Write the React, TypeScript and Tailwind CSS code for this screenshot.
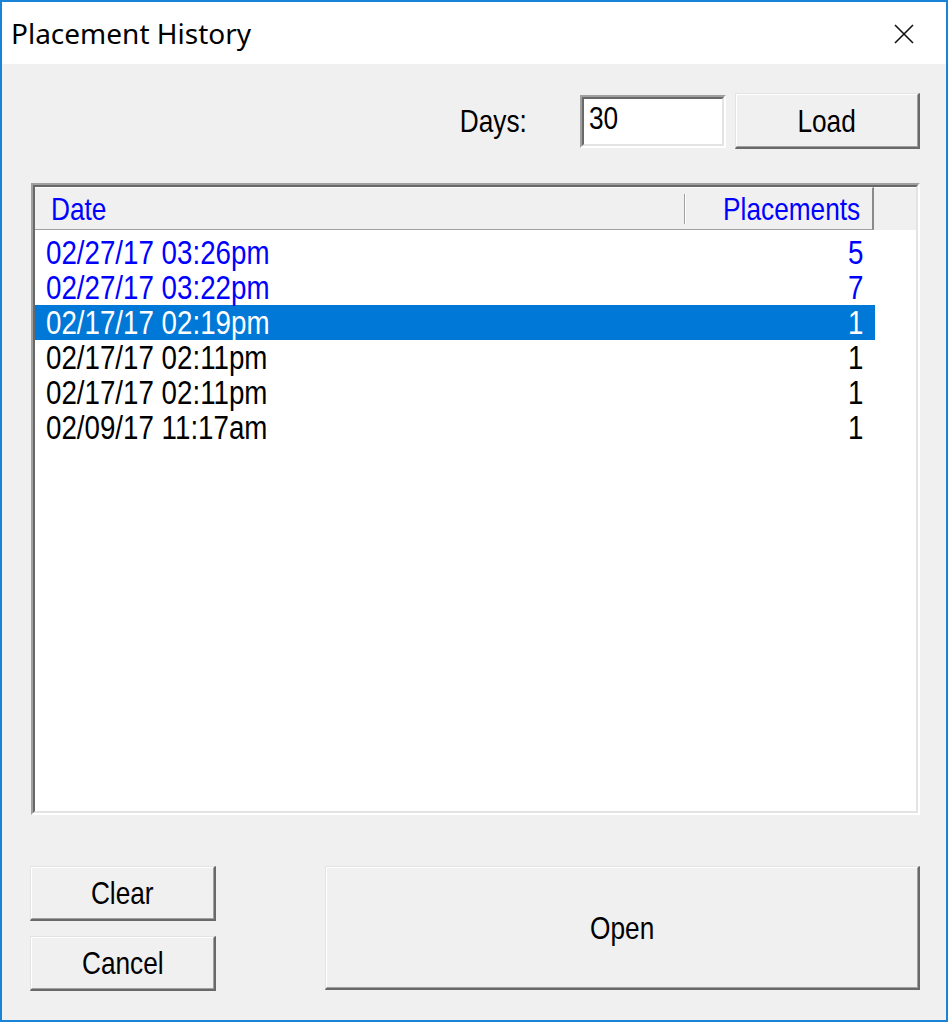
import React from "react";

const rows = [
  { d: "02/27/17 03:26pm", n: "5", kind: "blue" },
  { d: "02/27/17 03:22pm", n: "7", kind: "blue" },
  { d: "02/17/17 02:19pm", n: "1", kind: "sel" },
  { d: "02/17/17 02:11pm", n: "1", kind: "black" },
  { d: "02/17/17 02:11pm", n: "1", kind: "black" },
  { d: "02/09/17 11:17am", n: "1", kind: "black" },
];

function Btn({ label, className }: { label: string; className: string }) {
  return (
    <div
      className={
        "border-t border-l border-t-[#e3e3e3] border-l-[#e3e3e3] border-b-2 border-r-2 border-b-[#696969] border-r-[#696969] " +
        className
      }
    >
      <div className="w-full h-full border-t border-l border-t-white border-l-white border-b border-r border-b-[#a0a0a0] border-r-[#a0a0a0] bg-[#f0f0f0] flex items-center justify-center text-[32px] text-black leading-none">
        <span className="inline-block scale-x-[0.82] origin-center">{label}</span>
      </div>
    </div>
  );
}

export default function App() {
  return (
    <div className="w-[948px] h-[1022px] border-2 border-[#1883d7] bg-[#f0f0f0] flex flex-col font-['Liberation_Sans',Arial,sans-serif] overflow-hidden">
      {/* Title bar */}
      <div className="h-[62px] bg-white flex items-center justify-between pl-[9px] pr-[32px] shrink-0">
        <span className="font-['Noto_Sans',sans-serif] text-[28px] text-black leading-none pb-[1px]">
          Placement History
        </span>
        <svg width="20" height="20" viewBox="0 0 20 20" className="mt-[1px]">
          <path d="M1 1 L19 19 M19 1 L1 19" stroke="#111" strokeWidth="1.6" fill="none" />
        </svg>
      </div>

      {/* Body */}
      <div className="flex-1 flex flex-col pl-[29px] pr-[26px] pt-[29px]">
        {/* Days row */}
        <div className="h-[56px] flex items-center justify-end shrink-0">
          <span className="inline-block scale-x-[0.82] origin-right text-[32px] text-black leading-none mr-[53px] pb-[1px]">
            Days:
          </span>
          <div className="w-[146px] h-[53px] border-2 border-t-[#a0a0a0] border-l-[#a0a0a0] border-b-white border-r-white">
            <div className="w-full h-full border-2 border-t-[#696969] border-l-[#696969] border-b-[#e3e3e3] border-r-[#e3e3e3] bg-white pl-[5px] pt-[3px] text-[32px] leading-none text-black">
              <span className="inline-block scale-x-[0.82] origin-left">30</span>
            </div>
          </div>
          <Btn label="Load" className="w-[185px] h-[56px] ml-[9px]" />
        </div>

        {/* List */}
        <div className="mt-[34px] h-[632px] border-2 border-t-[#a0a0a0] border-l-[#a0a0a0] border-b-white border-r-white shrink-0">
          <div className="w-full h-full border-2 border-t-[#696969] border-l-[#696969] border-b-[#e3e3e3] border-r-[#e3e3e3] bg-white flex flex-col">
            {/* Header */}
            <div className="h-[43px] flex shrink-0 bg-[#f0f0f0]">
              <div className="w-[651px] h-full border-t border-t-white border-b border-b-[#a0a0a0] flex items-center justify-between pl-[16px]">
                <span className="inline-block scale-x-[0.82] origin-left text-[32px] text-[#0000ff] leading-none">
                  Date
                </span>
                <div className="w-[2px] h-[30px] border-l border-l-[#a0a0a0] border-r border-r-white" />
              </div>
              <div className="w-[188px] h-full border-t border-t-white border-b border-b-[#a0a0a0] border-r-2 border-r-[#8a8a8a] flex items-center justify-end pr-[12px]">
                <span className="inline-block scale-x-[0.82] origin-right text-[32px] text-[#0000ff] leading-none">
                  Placements
                </span>
              </div>
              <div className="flex-1 h-full border-t border-t-white" />
            </div>
            {/* Rows */}
            <div className="pt-[5px] flex flex-col">
              {rows.map((r, i) => (
                <div
                  key={i}
                  className={
                    "w-[840px] h-[35px] flex items-center justify-between pl-[11px] pr-[12px] text-[33px] leading-none " +
                    (r.kind === "sel"
                      ? "bg-[#0078d7] text-white"
                      : r.kind === "blue"
                      ? "text-[#0000ff]"
                      : "text-black")
                  }
                >
                  <span className="inline-block scale-x-[0.84] origin-left">{r.d}</span>
                  <span className="inline-block scale-x-[0.84] origin-right">{r.n}</span>
                </div>
              ))}
            </div>
          </div>
        </div>

        {/* Bottom buttons */}
        <div className="mt-[51px] h-[125px] flex shrink-0">
          <div className="flex flex-col gap-[15px] -ml-[1px]">
            <Btn label="Clear" className="w-[186px] h-[55px]" />
            <Btn label="Cancel" className="w-[186px] h-[55px]" />
          </div>
          <Btn label="Open" className="flex-1 h-[124px] ml-[109px]" />
        </div>
      </div>
    </div>
  );
}
